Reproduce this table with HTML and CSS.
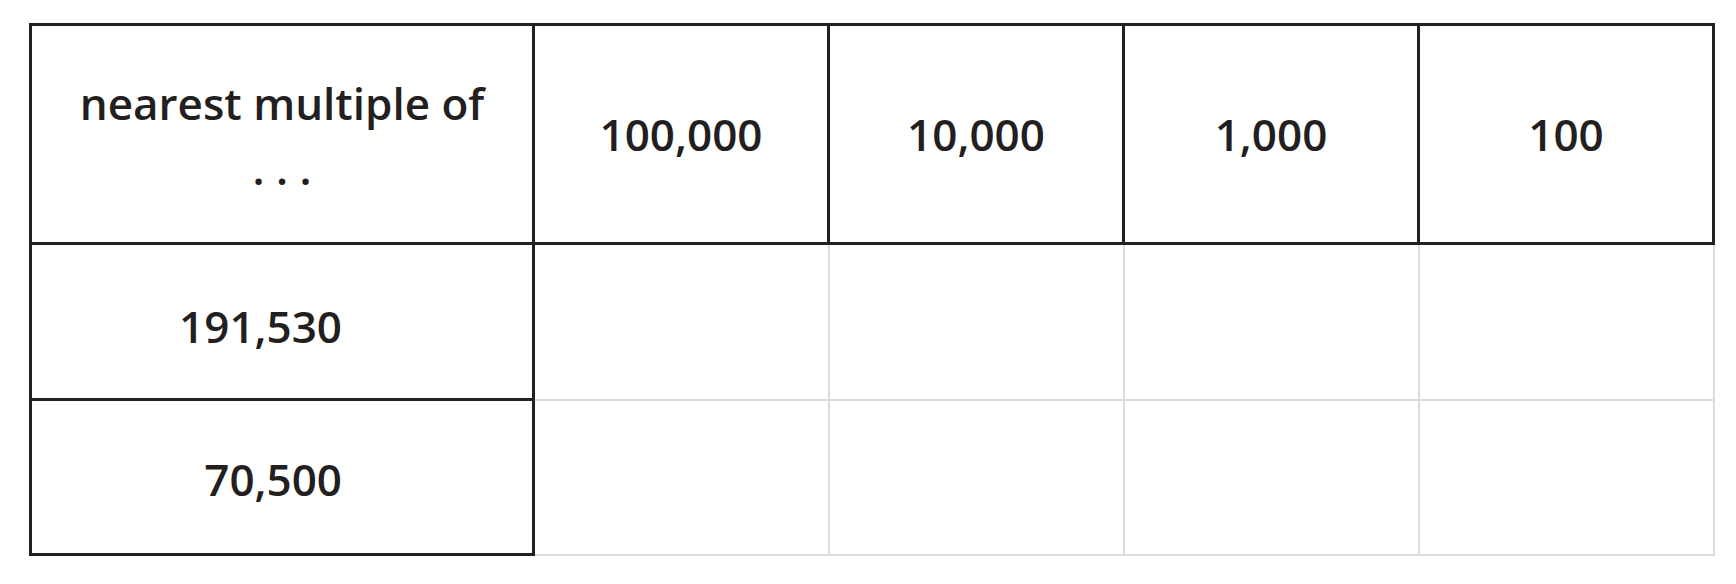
FILE: index.html
```html
<!DOCTYPE html>
<html lang="en">
<head>
<meta charset="utf-8">
<title>Rounding table</title>
<link rel="stylesheet" href="styles.css">
</head>
<body>
<table class="round-table">
  <colgroup>
    <col class="c-label">
    <col class="c-val">
    <col class="c-val">
    <col class="c-val">
    <col class="c-val">
  </colgroup>
  <thead>
    <tr class="r-head">
      <th class="h-label">nearest multiple of<br>. . .</th>
      <th>100,000</th>
      <th>10,000</th>
      <th>1,000</th>
      <th>100</th>
    </tr>
  </thead>
  <tbody>
    <tr class="r-one">
      <th class="row-label" scope="row">191,530</th>
      <td></td><td></td><td></td><td></td>
    </tr>
    <tr class="r-two">
      <th class="row-label" scope="row">70,500</th>
      <td></td><td></td><td></td><td></td>
    </tr>
  </tbody>
</table>
</body>
</html>
```

FILE: styles.css
```css
html, body {
  margin: 0;
  padding: 0;
  background: #ffffff;
}

body {
  font-family: "Open Sans", "Noto Sans", sans-serif;
  color: #231f20;
}

.round-table {
  border-collapse: collapse;
  table-layout: fixed;
  width: 1683px;
  margin: 23px 0 0 29px;
}

.c-label { width: 503px; }
.c-val { width: 295px; }

.round-table th,
.round-table td {
  padding: 0;
  text-align: center;
  vertical-align: middle;
  font-size: 44px;
  font-weight: 600;
}

.round-table thead th {
  border: 3px solid #222022;
}

.h-label {
  line-height: 65px;
}

.round-table .h-label {
  padding-top: 4px;
}

.r-head { height: 219px; }
.r-one { height: 156px; }
.r-two { height: 155px; }

.round-table .row-label {
  border: 3px solid #222022;
  text-align: right;
  padding-right: 190px;
}

.r-one .row-label { padding-top: 9px; }
.r-two .row-label { padding-top: 4px; }

.round-table td {
  border: 2px solid #dcdcdc;
}
```
